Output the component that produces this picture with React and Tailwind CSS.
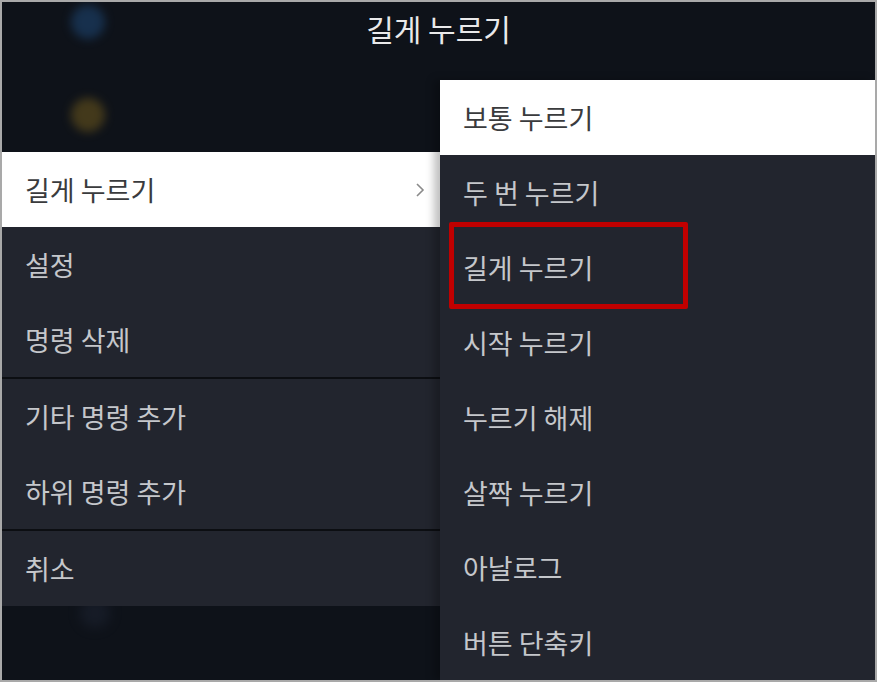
import React from "react";

const font = { fontFamily: '"Noto Sans CJK KR", "Noto Sans", sans-serif' };

function Row({ children, active, chevron }) {
  return (
    <div
      className={
        "h-[75px] flex items-center justify-between pl-[23px] pr-[14px] text-[27px] " +
        (active ? "bg-white text-[#3a3b3d]" : "text-[#c5c7cb]")
      }
    >
      <span className="leading-none">{children}</span>
      {chevron && (
        <svg width="10" height="16" viewBox="0 0 10 16" className="mr-[1px]">
          <path d="M2 2 L8 8 L2 14" fill="none" stroke="#8a8a8a" strokeWidth="1.6" />
        </svg>
      )}
    </div>
  );
}

function Sep() {
  return <div className="h-[2px] bg-[#0c0e12]" />;
}

export default function App() {
  return (
    <div className="w-[878px] h-[683px] bg-white" style={font}>
      <div className="w-[877px] h-[682px] border-2 border-[#a9a9a9] bg-[#0e1219] relative overflow-hidden flex flex-col">
        <div className="absolute left-[69px] top-[3px] w-[34px] h-[34px] rounded-full bg-[#1b3d63] blur-[5px] opacity-70" />
        <div className="absolute left-[69px] top-[96px] w-[34px] h-[34px] rounded-full bg-[#5a4a1c] blur-[5px] opacity-70" />
        <div className="absolute left-[78px] top-[596px] w-[30px] h-[30px] rounded-full bg-[#1c2230] blur-[6px] opacity-60" />
        <div className="h-[78px] flex justify-center pt-[11px] relative">
          <span className="text-[30px] leading-none text-[#e9e9ea]">길게 누르기</span>
        </div>
        <div className="flex items-start flex-1 relative">
          <div className="w-[438px] mt-[72px] bg-[#22252e]">
            <Row active chevron>길게 누르기</Row>
            <Row>설정</Row>
            <Row>명령 삭제</Row>
            <Sep />
            <Row>기타 명령 추가</Row>
            <Row>하위 명령 추가</Row>
            <Sep />
            <Row>취소</Row>
          </div>
          <div className="flex-1 self-stretch bg-[#22252e] shadow-[-6px_0_8px_rgba(0,0,0,0.25)] relative">
            <Row active>보통 누르기</Row>
            <Row>두 번 누르기</Row>
            <Row>길게 누르기</Row>
            <Row>시작 누르기</Row>
            <Row>누르기 해제</Row>
            <Row>살짝 누르기</Row>
            <Row>아날로그</Row>
            <Row>버튼 단축키</Row>
            <div className="absolute left-[9px] top-[142px] w-[239px] h-[87px] border-[5px] border-[#c00000] rounded-[2px]" />
          </div>
        </div>
      </div>
    </div>
  );
}
